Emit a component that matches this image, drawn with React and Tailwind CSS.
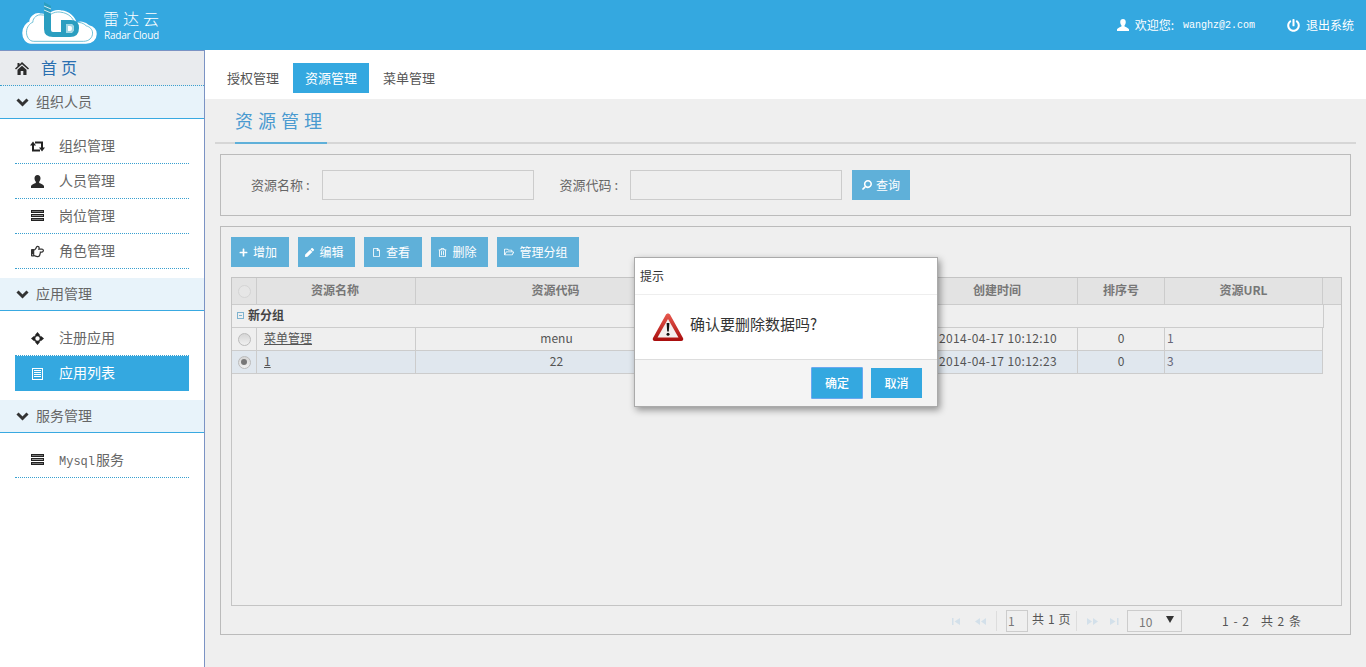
import React from "react";
import { FaRegHandPointRight, FaPowerOff, FaPlus, FaPen, FaRegFile, FaRegTrashAlt, FaRegFolderOpen, FaSearch } from "react-icons/fa";

const SANS = "font-['Noto_Sans_CJK_SC','Liberation_Sans',sans-serif]";

function HomeIcon() {
  return (
    <svg width="14" height="13" viewBox="0 0 14 13" fill="#2b2b2b">
      <path d="M7 0 14 6.500 13 7.500 7 2.200 1 7.500 0 6.500 2.500 4.200V1h2v1.400z" />
      <path d="M2.500 7.800 7 3.800l4.500 4V13H8.300V9H5.700v4H2.500z" />
    </svg>
  );
}
function Chevron() {
  return (
    <svg width="13" height="9" viewBox="0 0 13 9" fill="none" stroke="#333" strokeWidth="3" className="shrink-0">
      <path d="M1.500 1.500 6.500 6.500 11.500 1.500" />
    </svg>
  );
}
function RetweetIcon() {
  return (
    <svg width="15" height="11" viewBox="0 0 15 11" fill="#222" className="shrink-0">
      <path d="M3 4V9.500H10M12 7V1.500H5" fill="none" stroke="#222" strokeWidth="2" />
      <path d="M0 4.500 3 .5 6 4.500zM9 6.500 12 10.500 15 6.500z" />
    </svg>
  );
}
function UserIcon({ color = "#2b2b2b", size = 13 }) {
  return (
    <svg width={size} height={size} viewBox="0 0 13 13" fill={color}>
      <path d="M6.500 0C8.400 0 9.500 1.400 9.500 3.300c0 1.500-.6 2.800-1.300 3.500v1.200C10 8.800 12.300 9.700 13 11v2H0v-2c.7-1.300 3-2.200 4.800-3V6.800C4.100 6.100 3.500 4.800 3.500 3.300 3.500 1.400 4.600 0 6.500 0z" />
    </svg>
  );
}
function BarsIcon() {
  return (
    <svg width="13" height="12" viewBox="0 0 13 12">
      <rect y="0" width="13" height="3" fill="#222" />
      <rect y="4" width="13" height="3" fill="#222" />
      <rect y="8" width="13" height="3" fill="#222" />
      <rect x="1" y="5" width="11" height="1" fill="#999" />
      <rect x="1" y="1" width="11" height="1" fill="#777" />
      <rect x="1" y="9" width="11" height="1" fill="#777" />
    </svg>
  );
}
function MoveIcon() {
  return (
    <svg width="13" height="13" viewBox="0 0 13 13" fill="#222">
      <path d="M6.500 0 9 3H4zM6.500 13 4 10h5zM0 6.500 3 4v5zM13 6.500 10 9V4z" />
      <circle cx="6.500" cy="6.500" r="3" fill="none" stroke="#222" strokeWidth="1.600" />
    </svg>
  );
}
function ListIcon() {
  return (
    <svg width="11" height="12" viewBox="0 0 11 12" fill="none" stroke="#fff">
      <rect x="0.500" y="0.500" width="10" height="11" />
      <path d="M2 2.500h7M2 4.500h7M2 6.500h7M2 8.500h7" />
    </svg>
  );
}
function Logo() {
  const cloud =
    "M8 43C3 43 0 38 0 33 0 27 4 23 7 22 7 17 12 13 17 14 20 14 22 15 24 16 27 12 33 10 38 11 46 12 52 17 53 24 56 21 62 22 66 26 70 27 73 30 73 34 73 39 69 43 63 43Z";
  return (
    <svg width="75" height="46" viewBox="-1 0 75 46" className="shrink-0">
      <path d={cloud} fill="#fff" stroke="#fff" strokeWidth="1.500" />
      <path d={cloud} transform="translate(3.500 2.200) scale(.905 .91)" fill="#fff" stroke="#62bbd3" strokeWidth="1" />
      <path d="M21 2 28 6V30Q28 32 30 32H44V37H30Q21 37 21 29Z" fill="#2a9ec0" />
      <path d="M21 6 28 9M21 10 28 13" stroke="#fff" strokeWidth="0.800" />
      <path d="M38 20H48Q56 20 56 28 56 37 47 37H42V33H47Q51 33 51 28 51 24 47 24H43V37H38Z" fill="#2a9ec0" />
      <path d="M43 24H47Q51 24 51 28 51 33 47 33H43Z" fill="#9fd6e4" />
      <path d="M45 26H47Q49 26 49 28 49 31 47 31H45Z" fill="#fff" />
    </svg>
  );
}
function Warn() {
  return (
    <svg width="32" height="30" viewBox="0 0 32 30">
      <defs>
        <linearGradient id="wg" x1="0" y1="0" x2="0" y2="1">
          <stop offset="0" stopColor="#e85a4f" />
          <stop offset="1" stopColor="#a80d0d" />
        </linearGradient>
      </defs>
      <path d="M16 1.500c1 0 1.800.5 2.300 1.500l12.700 23c.7 1.500 0 3-1.800 3H2.800C1 29 .3 27.500 1 26L13.700 3c.5-1 1.300-1.500 2.300-1.500z" fill="url(#wg)" />
      <path d="M16 7 26.500 25.500h-21z" fill="#f4eeee" />
      <path d="M14.600 11h2.800l-.6 8.500h-1.600z" fill="#111" />
      <circle cx="16" cy="22.300" r="1.500" fill="#111" />
    </svg>
  );
}
function Pager({ kind }) {
  const paths = {
    first: "M1 1h1.500v7H1zM9 1v7L3.500 4.500z",
    prev: "M6 1v7L1 4.500zM12 1v7L7 4.500z",
    next: "M1 1v7l5-3.500zM7 1v7l5-3.500z",
    last: "M1 1v7l5.500-3.500zM8 1h1.500v7H8z",
  };
  return (
    <svg width="13" height="9" viewBox="0 0 13 9" fill="#d3e0ea">
      <path d={paths[kind]} />
    </svg>
  );
}
function Radio({ on, faint }) {
  return (
    <span
      className={`mt-[2px] flex h-[13px] w-[13px] items-center justify-center rounded-full border ${
        faint ? "border-[#d4d4d4] bg-[#e6e6e6]" : "border-[#bbb] bg-gradient-to-b from-[#d6d6d6] to-[#f0f0f0]"
      }`}
    >
      {on && <span className="h-[6px] w-[6px] rounded-full bg-[#777]" />}
    </span>
  );
}

function Group({ label, children }) {
  return (
    <div>
      <div className="flex h-[33px] items-center border-b border-[#39a9e1] bg-[#e8f3fa] pl-[16px] text-[14px] text-[#666]">
        <Chevron />
        <span className="ml-[7px] pb-[2px]">{label}</span>
      </div>
      <div className="mx-[15px] pt-[10px] pb-[9px]">{children}</div>
    </div>
  );
}
function Item({ icon, label, active, mono }) {
  return (
    <div
      className={`flex h-[35px] items-center pl-[15px] text-[14px] ${
        active ? "bg-[#34a8e0] text-white" : "border-b border-dotted border-[#39a0d0] text-[#666]"
      }`}
    >
      <span className="flex w-[14px] justify-center">{icon}</span>
      <span className={`ml-[15px] ${mono ? "" : "pb-[2px]"}`}>
        {mono && <span className="mr-[1px] font-['Liberation_Mono',monospace] text-[12px]">Mysql</span>}
        {label}
      </span>
    </div>
  );
}
function ToolBtn({ icon, label, w }) {
  return (
    <button className={`flex h-[30px] ${w} items-center justify-center gap-[5px] bg-[#5fb0d9] pr-[4px] text-[12px] text-white`}>
      {icon}
      <span>{label}</span>
    </button>
  );
}

const COLS = "grid grid-cols-[25px_159px_282px_235px_145px_87px_158px]";
const CELL = "flex items-center border-r border-[#ccc] overflow-hidden pb-[2px]";

function Row({ on, name, code, time, order, url, bg }) {
  return (
    <div className={`${COLS} h-[23px] w-[1091px] border-b border-[#ccc] text-[12px] text-[#555] ${bg}`}>
      <div className={`${CELL} justify-center`}>
        <Radio on={on} />
      </div>
      <div className={`${CELL} pl-[7px]`}>
        <span className="underline">{name}</span>
      </div>
      <div className={`${CELL} justify-center`}>{code}</div>
      <div className={CELL}></div>
      <div className={`${CELL} justify-end pr-[20px] tracking-[0.370px] whitespace-nowrap`}>{time}</div>
      <div className={`${CELL} justify-center`}>{order}</div>
      <div className={`${CELL} pl-[2px] text-[#667]`}>{url}</div>
    </div>
  );
}

export default function App() {
  return (
    <div className={`flex h-[667px] w-[1366px] flex-col overflow-hidden bg-white ${SANS}`}>
      <header className="flex h-[50px] shrink-0 items-center bg-[#34a8e0] text-white">
        <div className="ml-[22px] flex items-center self-start">
          <Logo />
          <div className="ml-[6px] pt-[4px]">
            <div className="text-[16px] leading-[20px] tracking-[4px] font-light">雷达云</div>
            <div className="ml-[1px] text-[10px] leading-[14px] tracking-[-0.200px] font-['Open_Sans',sans-serif]">Radar Cloud</div>
          </div>
        </div>
        <div className="ml-auto flex items-center pr-[12px] text-[12px]">
          <UserIcon color="#fff" size={12} />
          <span className="ml-[6px]">欢迎您:</span>
          <span className="ml-[9px] font-['Liberation_Mono',monospace] text-[10px]">wanghz@2.com</span>
          <FaPowerOff className="ml-[32px] h-[13px] w-[13px]" />
          <span className="ml-[6px]">退出系统</span>
        </div>
      </header>

      <div className="flex min-h-0 flex-1">
        <aside className="w-[205px] shrink-0 border-t border-r border-[#7b93c4] bg-white">
          <div className="flex h-[35px] items-center border-b border-dotted border-[#39a0d0] bg-[#e9ebee] pl-[15px]">
            <HomeIcon />
            <span className="ml-[12px] pb-[2px] text-[16px] tracking-[4px] text-[#2a6fb0]">首页</span>
          </div>
          <Group label="组织人员">
            <Item icon={<RetweetIcon />} label="组织管理" />
            <Item icon={<UserIcon />} label="人员管理" />
            <Item icon={<BarsIcon />} label="岗位管理" />
            <Item icon={<FaRegHandPointRight className="h-[13px] w-[13px] text-[#333]" />} label="角色管理" />
          </Group>
          <Group label="应用管理">
            <Item icon={<MoveIcon />} label="注册应用" />
            <Item icon={<ListIcon />} label="应用列表" active />
          </Group>
          <Group label="服务管理">
            <Item icon={<BarsIcon />} label="服务" mono />
          </Group>
        </aside>

        <main className="relative flex min-w-0 flex-1 flex-col bg-[#efefef]">
          <nav className="flex h-[49px] shrink-0 items-start gap-[2px] bg-white pt-[13px] pl-[10px] text-[13px] text-[#555]">
            <span className="flex h-[30px] items-center px-[12px]">授权管理</span>
            <span className="flex h-[30px] items-center bg-[#34a8e0] px-[12px] text-white">资源管理</span>
            <span className="flex h-[30px] items-center px-[12px]">菜单管理</span>
          </nav>

          <div className="mx-[10px] flex h-[45px] shrink-0 border-b-2 border-[#d6d6d6]">
            <div className="relative ml-[20px] flex h-[45px] w-[92px] items-center border-b-2 border-[#5fb0d9] text-[18px] tracking-[5px] whitespace-nowrap text-[#4a9ad0]">
              资源管理
            </div>
          </div>

          <section className="mx-[15px] mt-[10px] flex h-[62px] shrink-0 items-center border border-[#bbb] pl-[30px] text-[13px] text-[#666]">
            <span>资源名称 :</span>
            <span className="ml-[12px] h-[30px] w-[212px] border border-[#ccc]" />
            <span className="ml-[26px]">资源代码 :</span>
            <span className="ml-[12px] h-[30px] w-[212px] border border-[#ccc]" />
            <button className="ml-[10px] flex h-[30px] w-[58px] items-center justify-center gap-[4px] bg-[#5fb0d9] text-[12px] text-white">
              <FaSearch className="h-[10px] w-[10px] -scale-x-100" />
              查询
            </button>
          </section>

          <section className="mx-[15px] mt-[10px] flex h-[409px] shrink-0 flex-col border border-[#bbb] px-[10px] pt-[10px]">
            <div className="flex gap-[9px]">
              <ToolBtn w="w-[58px]" icon={<FaPlus className="h-[9px] w-[9px]" />} label="增加" />
              <ToolBtn w="w-[57px]" icon={<FaPen className="h-[9px] w-[9px]" />} label="编辑" />
              <ToolBtn w="w-[58px]" icon={<FaRegFile className="h-[9px] w-[9px]" />} label="查看" />
              <ToolBtn w="w-[57px]" icon={<FaRegTrashAlt className="h-[9px] w-[9px]" />} label="删除" />
              <ToolBtn w="w-[82px]" icon={<FaRegFolderOpen className="h-[10px] w-[10px]" />} label="管理分组" />
            </div>

            <div className="mt-[10px] h-[329px] w-[1111px] border border-[#c4c4c4]">
              <div className="h-[27px] border-b border-[#ccc] bg-[#e3e3e3]">
                <div className={`${COLS} h-full w-[1091px] text-[12px] font-bold text-[#777]`}>
                  <div className={`${CELL} justify-center`}>
                    <Radio faint />
                  </div>
                  <div className={`${CELL} justify-center pr-[2px]`}>资源名称</div>
                  <div className={`${CELL} justify-center pr-[2px]`}>资源代码</div>
                  <div className={CELL}></div>
                  <div className={`${CELL} justify-end pr-[56px]`}>创建时间</div>
                  <div className={`${CELL} justify-center`}>排序号</div>
                  <div className={`${CELL} justify-center`}>资源URL</div>
                </div>
              </div>
              <div className="flex h-[23px] w-[1092px] items-center border-r border-b border-[#ccc] pb-[2px] pl-[5px] text-[12px] font-bold text-[#444]">
                <span className="flex h-[7px] w-[7px] items-center justify-center border border-[#7fb3cf]">
                  <span className="h-px w-[3px] bg-[#7fb3cf]" />
                </span>
                <span className="ml-[4px]">新分组</span>
              </div>
              <Row name="菜单管理" code="menu" time="2014-04-17 10:12:10" order="0" url="1" bg="" />
              <Row on name="1" code="22" time="2014-04-17 10:12:23" order="0" url="3" bg="bg-[#e0e7ee]" />
            </div>

            <div className="flex flex-1 items-start pt-[4px] text-[12px] text-[#555]">
              <div className="ml-[720px] flex h-[22px] w-[13px] items-center"><Pager kind="first" /></div>
              <div className="ml-[10px] flex h-[22px] w-[13px] items-center"><Pager kind="prev" /></div>
              <span className="ml-[9px] mt-[1px] h-[20px] w-[1px] bg-[#ddd]" />
              <span className="ml-[9px] flex h-[22px] w-[22px] items-center border border-[#ccc] pl-[1px] text-[#777]">1</span>
              <span className="ml-[4px] leading-[18px] tracking-[0.600px] whitespace-nowrap">共 1 页</span>
              <span className="ml-[5px] mt-[1px] h-[20px] w-[1px] bg-[#ddd]" />
              <div className="ml-[9px] flex h-[22px] w-[13px] items-center"><Pager kind="next" /></div>
              <div className="ml-[10px] flex h-[22px] w-[13px] items-center"><Pager kind="last" /></div>
              <span className="ml-[5px] flex h-[22px] w-[55px] items-center justify-between border border-[#ccc] pr-[7px] pl-[11px] text-[#777]">
                <span className="pt-[2px]">10</span>
                <span className="mb-[3px] border-x-[4px] border-t-[7px] border-x-transparent border-t-[#333]" />
              </span>
              <span className="ml-[40px] leading-[22px] tracking-[1px] whitespace-nowrap">1 - 2</span>
              <span className="ml-[11px] leading-[22px] tracking-[1px] whitespace-nowrap">共 2 条</span>
            </div>
          </section>

          <div className="absolute top-[207px] left-[429px] flex h-[150px] w-[304px] flex-col border border-[#aaa] bg-white shadow-[2px_3px_7px_rgba(0,0,0,0.4)]">
            <div className="flex h-[37px] items-center border-b border-[#eee] pl-[5px] text-[12px] text-[#333]">提示</div>
            <div className="flex h-[64px] items-center pl-[17px] text-[15px] text-[#333]">
              <Warn />
              <span className="ml-[6px] pb-[6px]">确认要删除数据吗?</span>
            </div>
            <div className="flex flex-1 items-start justify-end gap-[8px] border-t border-[#ddd] bg-[#f4f4f4] pt-[7px] pr-[15px] text-[12px] text-white">
              <button className="h-[32px] w-[52px] rounded-[1px] border border-[#6aa8f0] bg-[#34a8e0] font-medium">确定</button>
              <button className="mt-[1px] h-[30px] w-[51px] bg-[#34a8e0] font-medium">取消</button>
            </div>
          </div>
        </main>
      </div>
    </div>
  );
}
